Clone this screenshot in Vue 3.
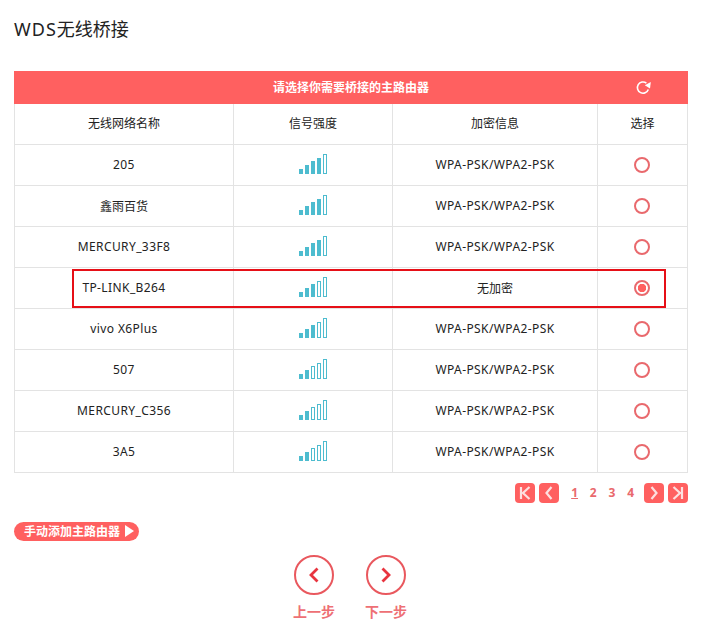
<template>
  <div class="page">
    <h1 class="title"><span class="latin-title">WDS</span>无线桥接</h1>

    <div class="panel">
      <div class="panel-head">
        <span class="panel-title">请选择你需要桥接的主路由器</span>
        <svg class="refresh" width="18" height="18" viewBox="0 0 18 18">
          <path d="M14.3 11.4A5.6 5.6 0 1 1 12.4 5.1" fill="none" stroke="#fff" stroke-width="1.6" />
          <path d="M10.8 7.2 16.8 4 16 10.6z" fill="#fff" />
        </svg>
      </div>
      <div class="table-wrap">
        <table class="ap-table">
          <colgroup>
            <col style="width: 219px" />
            <col style="width: 159px" />
            <col style="width: 205px" />
            <col />
          </colgroup>
          <thead>
            <tr>
              <th>无线网络名称</th>
              <th>信号强度</th>
              <th>加密信息</th>
              <th>选择</th>
            </tr>
          </thead>
          <tbody>
            <tr v-for="ap in apList" :key="ap.name">
              <td :class="{ latin: !ap.cjk }">{{ ap.name }}</td>
              <td>
                <span class="signal">
                  <i
                    v-for="n in 5"
                    :key="n"
                    :class="{ on: n <= ap.level }"
                    :style="{ height: barHeights[n - 1] + 'px' }"
                  ></i>
                </span>
              </td>
              <td :class="{ latin: ap.security === wpa }">{{ ap.security }}</td>
              <td class="pick">
                <span class="radio" :class="{ checked: ap.checked }"></span>
              </td>
            </tr>
          </tbody>
        </table>
        <div class="highlight"></div>
      </div>
    </div>

    <div class="pager">
      <button class="page-btn">
        <svg width="20" height="20" viewBox="0 0 20 20"><path d="M6 4v12M14.5 4 8 10l6.5 6" class="pg-line" /></svg>
      </button>
      <button class="page-btn">
        <svg width="20" height="20" viewBox="0 0 20 20"><path d="M12.5 4 7.5 10l5 6" class="pg-line" /></svg>
      </button>
      <div class="nums">
        <span class="num active">1</span>
        <span class="num">2</span>
        <span class="num">3</span>
        <span class="num">4</span>
      </div>
      <button class="page-btn">
        <svg width="20" height="20" viewBox="0 0 20 20"><path d="M7.5 4l5 6-5 6" class="pg-line" /></svg>
      </button>
      <button class="page-btn">
        <svg width="20" height="20" viewBox="0 0 20 20"><path d="M14 4v12M5.5 4 12 10l-6.5 6" class="pg-line" /></svg>
      </button>
    </div>

    <div class="add-row">
      <span class="add-btn">手动添加主路由器<i class="tri"></i></span>
    </div>

    <div class="steps">
      <div class="step">
        <span class="circle">
          <svg width="16" height="20" viewBox="0 0 16 20"><path d="M11.5 3.5 5 10l6.5 6.5" class="step-line" /></svg>
        </span>
        <span class="step-label">上一步</span>
      </div>
      <div class="step">
        <span class="circle">
          <svg width="16" height="20" viewBox="0 0 16 20"><path d="M4.5 3.5 11 10l-6.5 6.5" class="step-line" /></svg>
        </span>
        <span class="step-label">下一步</span>
      </div>
    </div>
  </div>
</template>

<script setup>
const barHeights = [5, 9, 13, 16, 20]
const wpa = 'WPA-PSK/WPA2-PSK'

const apList = [
  { name: '205', level: 4, security: wpa },
  { name: '鑫雨百货', cjk: true, level: 4, security: wpa },
  { name: 'MERCURY_33F8', level: 4, security: wpa },
  { name: 'TP-LINK_B264', level: 3, security: '无加密', checked: true },
  { name: 'vivo X6Plus', level: 3, security: wpa },
  { name: '507', level: 2, security: wpa },
  { name: 'MERCURY_C356', level: 2, security: wpa },
  { name: '3A5', level: 2, security: wpa }
]
</script>

<style>
html,
body {
  background: #fff;
}
</style>

<style scoped>
.page {
  width: 709px;
  height: 644px;
  padding: 17px 21px 0 14px;
  box-sizing: border-box;
  font-family: "Noto Sans", "Noto Sans CJK SC", sans-serif;
  font-size: 12px;
  color: #222;
  overflow: hidden;
}

.title {
  margin: 0;
  font-size: 18px;
  line-height: 25px;
  font-weight: 400;
  color: #222;
}

.latin-title {
  letter-spacing: 1px;
}

.panel {
  margin-top: 29px;
}

.panel-head {
  position: relative;
  height: 33px;
  padding-bottom: 2px;
  box-sizing: border-box;
  background: #ff6060;
  color: #fff;
  display: flex;
  align-items: center;
  justify-content: center;
}

.panel-title {
  font-weight: 700;
}

.refresh {
  position: absolute;
  left: 620px;
  top: 7px;
}

.table-wrap {
  position: relative;
}

.ap-table {
  width: 674px;
  table-layout: fixed;
  border-collapse: collapse;
}

.ap-table th,
.ap-table td {
  height: 41px;
  padding: 0;
  box-sizing: border-box;
  border: 1px solid #e3e3e3;
  text-align: center;
  font-weight: 400;
  color: #222;
}

.ap-table td.latin {
  letter-spacing: 0.4px;
}

.ap-table thead th {
  height: 40px;
  padding-bottom: 2px;
  border-top: 0;
}

.ap-table td.pick {
  padding-right: 2px;
}

.signal {
  display: inline-flex;
  align-items: flex-end;
  gap: 2px;
  height: 20px;
  vertical-align: middle;
  margin-top: -1px;
}

.signal i {
  display: block;
  width: 4px;
  box-sizing: border-box;
  border: 1px solid #4dbccf;
}

.signal i.on {
  background: #4dbccf;
}

.radio {
  display: inline-block;
  width: 16px;
  height: 16px;
  box-sizing: border-box;
  border: 2px solid #e9696d;
  border-radius: 50%;
  vertical-align: middle;
}

.radio.checked {
  background: radial-gradient(circle, #ff6060 0 4px, #fff 4.5px);
}

.highlight {
  position: absolute;
  left: 58px;
  top: 165px;
  width: 594px;
  height: 39px;
  box-sizing: border-box;
  border: 2px solid #e60f17;
}

.pager {
  display: flex;
  justify-content: flex-end;
  align-items: center;
  margin-top: 10px;
  height: 20px;
  gap: 4px;
}

.page-btn {
  width: 20px;
  height: 20px;
  padding: 0;
  border: 0;
  border-radius: 4px;
  background: #ff6060;
  display: flex;
  align-items: center;
  justify-content: center;
}

.pg-line {
  fill: none;
  stroke: #fde0e0;
  stroke-width: 2.2;
}

.nums {
  display: flex;
  gap: 4px;
  margin: 0 2px 0 4px;
}

.num {
  width: 14.7px;
  text-align: center;
  font-weight: 700;
  color: #e9696d;
}

.num.active {
  text-decoration: underline;
}

.add-row {
  margin-top: 19px;
  height: 20px;
}

.add-btn {
  display: inline-flex;
  align-items: center;
  height: 19px;
  padding: 0 5px 0 10px;
  border-radius: 10px;
  background: #ff6060;
  color: #fff;
  font-size: 12px;
  font-weight: 700;
}

.tri {
  margin-left: 5px;
  border-left: 9px solid #fff;
  border-top: 6px solid transparent;
  border-bottom: 6px solid transparent;
}

.steps {
  display: flex;
  justify-content: center;
  gap: 30px;
  margin-top: 13px;
  padding-right: 2px;
}

.step {
  display: flex;
  flex-direction: column;
  align-items: center;
  gap: 6px;
}

.circle {
  width: 40px;
  height: 40px;
  box-sizing: border-box;
  border: 2px solid #e9585e;
  border-radius: 50%;
  display: flex;
  align-items: center;
  justify-content: center;
}

.step-line {
  fill: none;
  stroke: #e8343f;
  stroke-width: 2.8;
}

.step-label {
  font-size: 14px;
  font-weight: 700;
  color: #ee7075;
}
</style>
